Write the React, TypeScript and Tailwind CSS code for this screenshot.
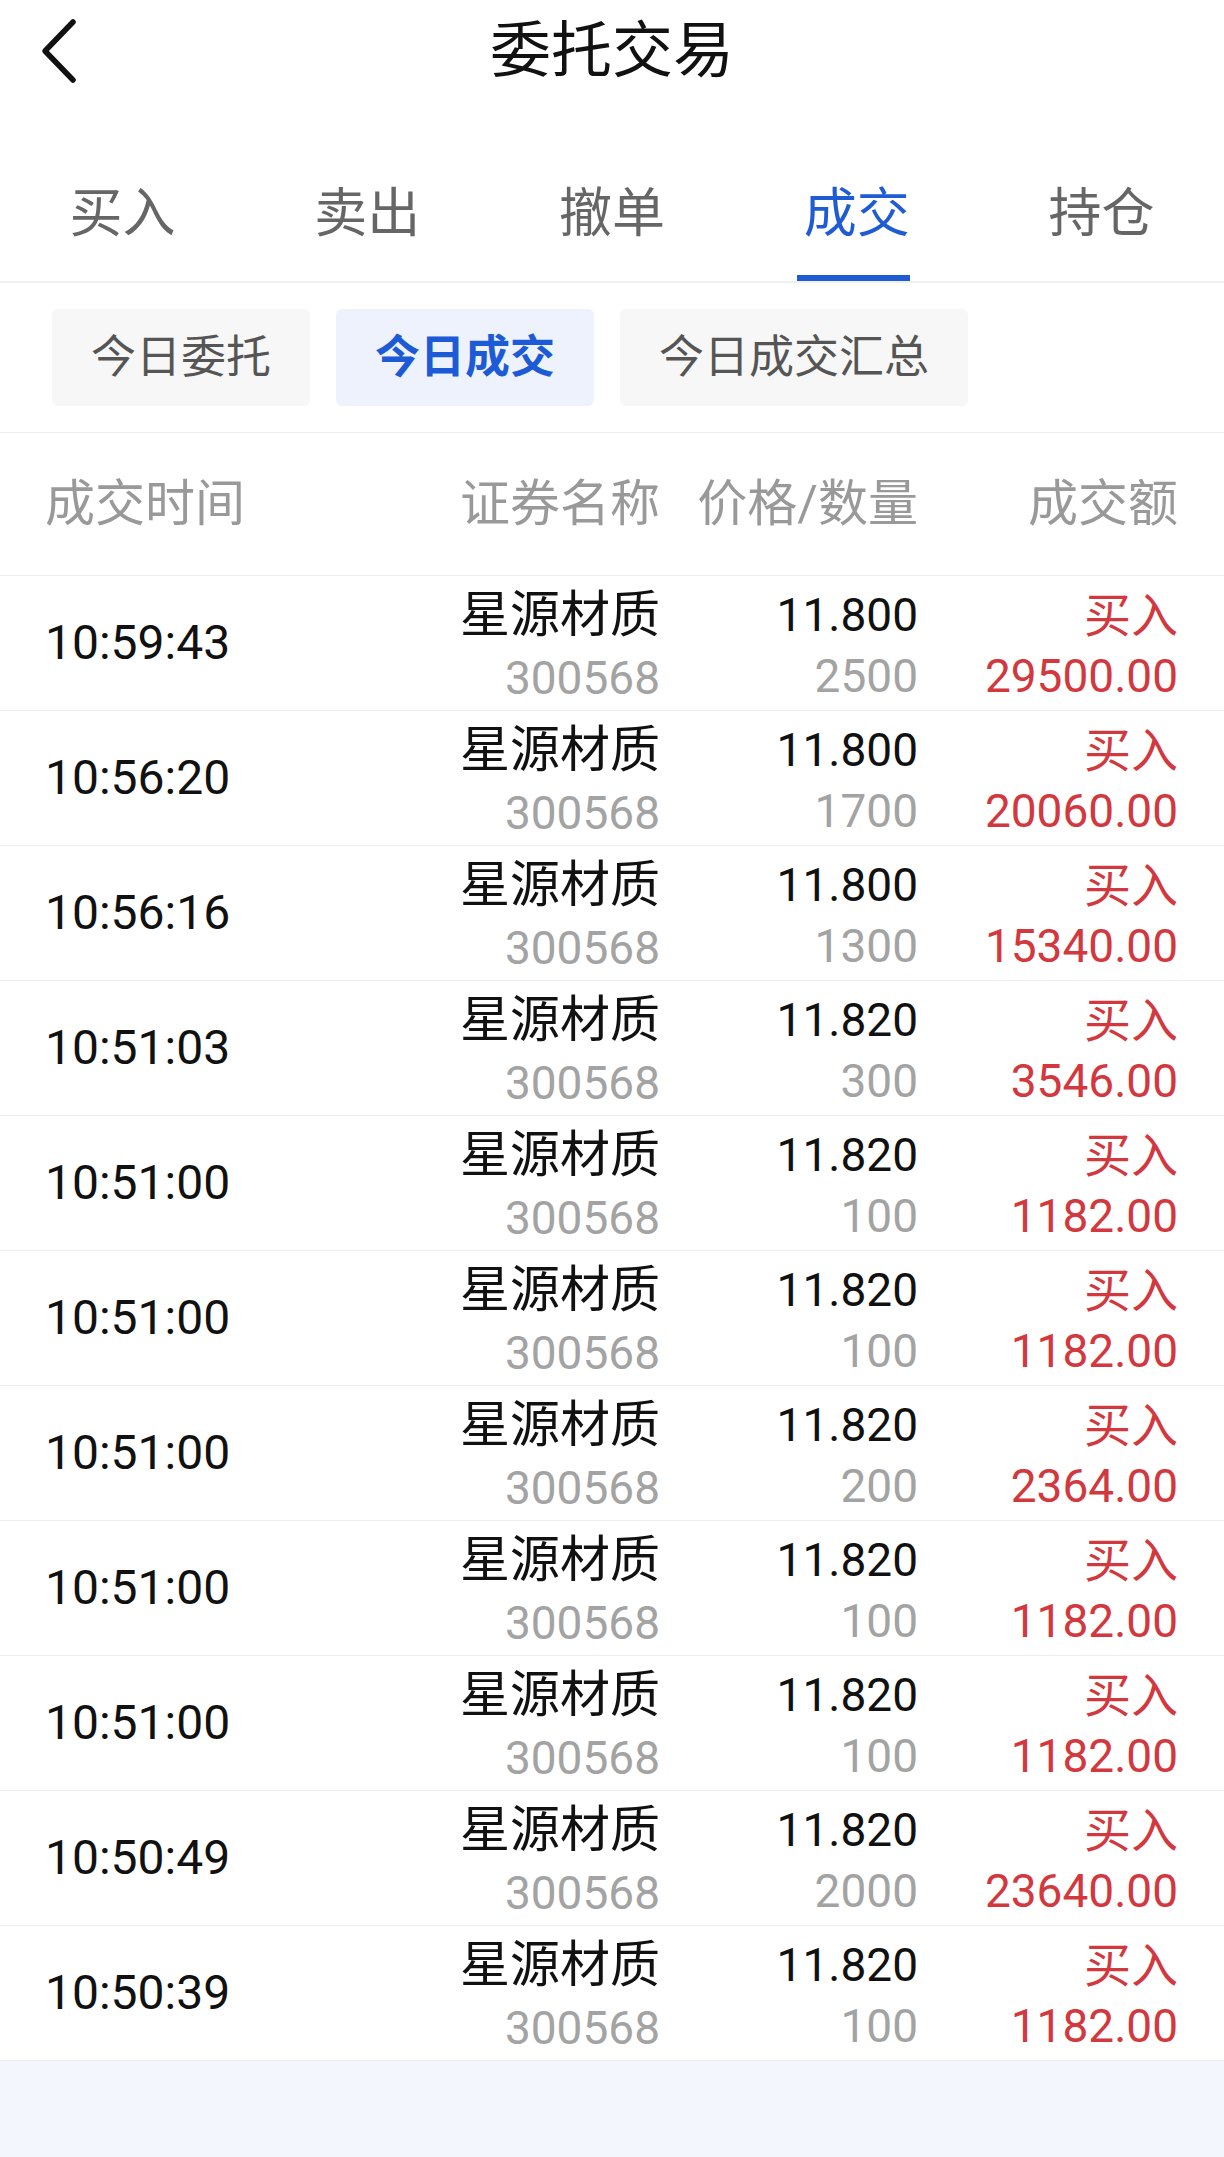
import React from "react"

const tabs = ["买入", "卖出", "撤单", "成交", "持仓"]
const filters = ["今日委托", "今日成交", "今日成交汇总"]

const trades = [
  { time: "10:59:43", price: "11.800", qty: "2500", amount: "29500.00" },
  { time: "10:56:20", price: "11.800", qty: "1700", amount: "20060.00" },
  { time: "10:56:16", price: "11.800", qty: "1300", amount: "15340.00" },
  { time: "10:51:03", price: "11.820", qty: "300", amount: "3546.00" },
  { time: "10:51:00", price: "11.820", qty: "100", amount: "1182.00" },
  { time: "10:51:00", price: "11.820", qty: "100", amount: "1182.00" },
  { time: "10:51:00", price: "11.820", qty: "200", amount: "2364.00" },
  { time: "10:51:00", price: "11.820", qty: "100", amount: "1182.00" },
  { time: "10:51:00", price: "11.820", qty: "100", amount: "1182.00" },
  { time: "10:50:49", price: "11.820", qty: "2000", amount: "23640.00" },
  { time: "10:50:39", price: "11.820", qty: "100", amount: "1182.00" },
]

const font = "font-['Roboto','Noto_Sans_CJK_SC',sans-serif]"
const cols = "grid grid-cols-[315px_300px_258px_260px] pl-[45px]"

export default function App() {
  return (
    <div className={`min-h-[2157px] w-[1224px] bg-[#f3f6fd] ${font}`}>
      <div className="bg-white">
        {/* top bar */}
        <div className="grid h-[102px] grid-cols-[1fr_auto_1fr] items-center">
          <div className="pl-[40px]">
            <svg width="40" height="66" viewBox="0 0 40 66" fill="none">
              <polyline points="33,4 5,33 33,62" stroke="#111" strokeWidth="5.5" strokeLinecap="round" strokeLinejoin="round" />
            </svg>
          </div>
          <div className="text-[61px] leading-none text-[#111]">委托交易</div>
          <div />
        </div>

        {/* main tabs */}
        <div className="grid h-[181px] grid-cols-5 border-b-2 border-[#f0f0f0]">
          {tabs.map((t) => {
            const active = t === "成交"
            return (
              <div key={t} className="flex flex-col items-center justify-end">
                <div className={`text-[53px] leading-[68px] ${active ? "text-[#1f5bd3]" : "text-[#666666]"}`}>{t}</div>
                <div className={`mt-[27px] mr-[6px] h-[6px] w-[113px] ${active ? "bg-[#1f5bd3]" : "bg-transparent"}`} />
              </div>
            )
          })}
        </div>

        {/* filter chips */}
        <div className="flex gap-[26px] border-b border-[#eeeeee] pb-[26px] pl-[52px] pt-[26px]">
          {filters.map((f) => {
            const active = f === "今日成交"
            return (
              <div
                key={f}
                className={`flex h-[97px] items-center rounded-[6px] px-[39px] text-[45px] ${
                  active ? "bg-[#edf2fc] font-bold text-[#1d5ad6]" : "bg-[#f7f7f7] text-[#555555]"
                }`}
              >
                {f}
              </div>
            )
          })}
        </div>

        {/* column header */}
        <div className={`${cols} h-[143px] items-center border-b border-[#eeeeee] text-[50px] text-[#999999]`}>
          <div>成交时间</div>
          <div className="text-right">证券名称</div>
          <div className="text-right">价格/数量</div>
          <div className="text-right">成交额</div>
        </div>

        {/* rows */}
        {trades.map((r, i) => (
          <div key={i} className={`${cols} h-[135px] border-b border-[#eeeeee] pt-[8px]`}>
            <div className="flex items-center pb-[8px] text-[48px] text-[#111]">{r.time}</div>
            <div className="text-right">
              <div className="text-[50px] leading-[63px] text-[#111]">星源材质</div>
              <div className="text-[46px] leading-[63px] text-[#a3a3a3]">300568</div>
            </div>
            <div className="text-right">
              <div className="text-[46px] leading-[63px] text-[#111]">{r.price}</div>
              <div className="text-[46px] leading-[58px] text-[#a3a3a3]">{r.qty}</div>
            </div>
            <div className="text-right">
              <div className="text-[47px] leading-[63px] text-[#d2383e]">买入</div>
              <div className="text-[46px] leading-[58px] text-[#d2383e]">{r.amount}</div>
            </div>
          </div>
        ))}
      </div>
    </div>
  )
}
